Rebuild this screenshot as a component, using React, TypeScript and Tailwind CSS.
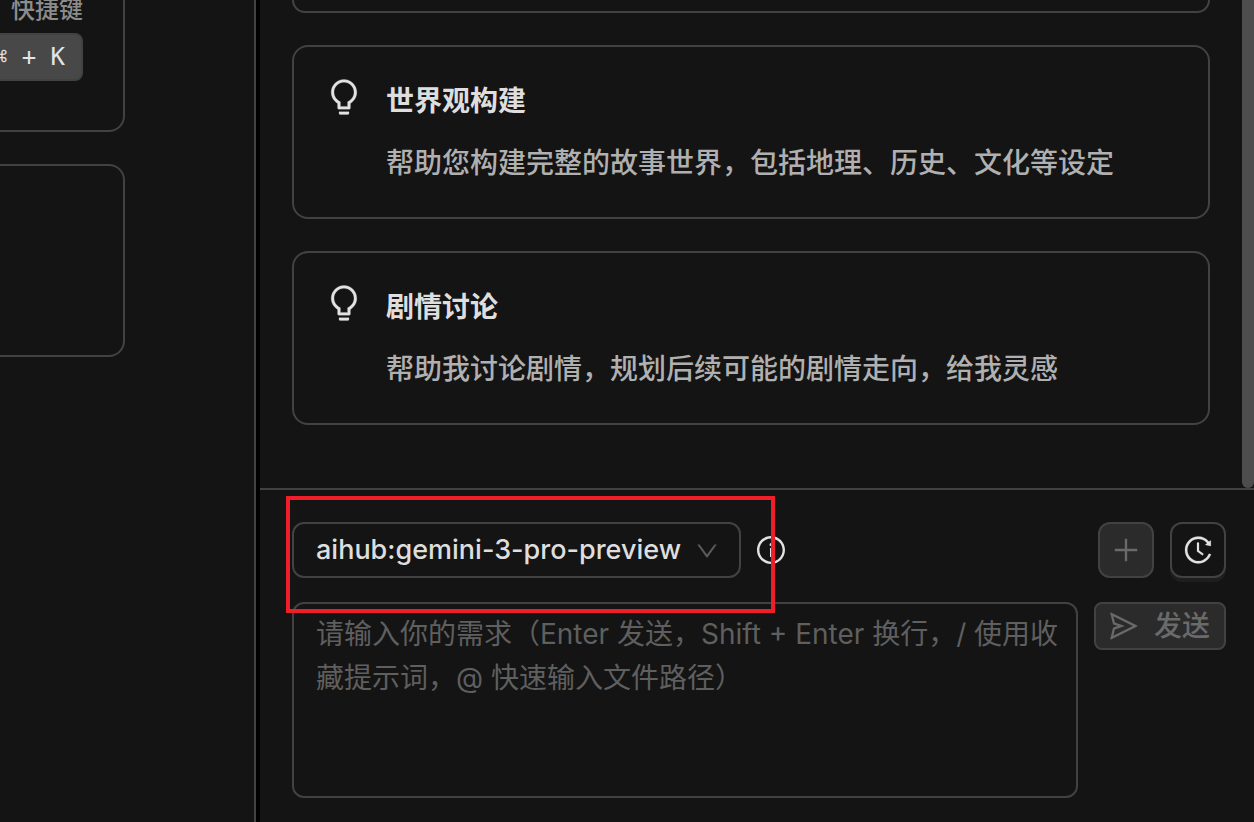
import { useState } from "react";
import {
    AiOutlineBulb,
    AiOutlineDown,
    AiOutlineHistory,
    AiOutlineInfoCircle,
    AiOutlinePlus,
    AiOutlineSend,
} from "react-icons/ai";

const prompts = [
    {
        title: "世界观构建",
        description: "帮助您构建完整的故事世界，包括地理、历史、文化等设定",
    },
    {
        title: "剧情讨论",
        description: "帮助我讨论剧情，规划后续可能的剧情走向，给我灵感",
    },
];

function ShortcutPanel() {
    return (
        <aside className="flex w-64 shrink-0 flex-col gap-8 border-r-2 border-[#424242] pr-[129px]">
            <section className="flex flex-col items-end gap-[13px] overflow-hidden rounded-br-2xl border-r-2 border-b-2 border-[#424242] pr-10 pb-[49px]">
                <p className="text-2xl leading-5 font-medium whitespace-nowrap text-[#8c8c8c]">快捷键</p>
                <div className="flex w-full justify-end">
                    <kbd className="flex h-12 shrink-0 items-center rounded-lg border-2 border-[#424242] bg-[#484848] px-4 font-['DejaVu_Sans_Mono',monospace] text-2xl whitespace-pre text-[#e4e4e4]">
                        ⌘ + K
                    </kbd>
                </div>
            </section>
            <section className="h-[193px] rounded-r-2xl border-2 border-l-0 border-[#424242]" />
        </aside>
    );
}

function PromptCard({ title, description }: { title: string; description: string }) {
    return (
        <button
            type="button"
            className="flex w-full shrink-0 items-start gap-[22px] rounded-2xl border-2 border-[#424242] px-[30px] py-[30px] text-left"
        >
            <AiOutlineBulb strokeWidth={6} className="size-10 shrink-0 text-[#e2e2e2]" />
            <span className="flex flex-col gap-[18px] py-[2px] text-[28px] leading-[44px]">
                <span className="font-bold text-[#dedede]">{title}</span>
                <span className="font-medium text-[#b0b0b0]">{description}</span>
            </span>
        </button>
    );
}

function Composer() {
    const [model, setModel] = useState("aihub:gemini-3-pro-preview");
    const [message, setMessage] = useState("");

    return (
        <form
            className="flex shrink-0 flex-col gap-6 border-t-2 border-[#424242] pt-8 pr-7 pb-6 pl-8"
            onSubmit={(e) => e.preventDefault()}
        >
            <div className="flex items-center">
                <div className="relative w-[449px]">
                    <select
                        aria-label="模型"
                        value={model}
                        onChange={(e) => setModel(e.target.value)}
                        className="block h-14 w-full appearance-none rounded-xl border-2 border-[#424242] bg-[#141414] pr-12 pl-[22px] text-[27px] font-medium text-[#dedede] outline-none"
                    >
                        <option>aihub:gemini-3-pro-preview</option>
                    </select>
                    <AiOutlineDown className="pointer-events-none absolute top-4 right-[21px] size-[26px] text-[#5a5a5a]" />
                    {/* highlight frame around the model picker */}
                    <div className="pointer-events-none absolute -top-[26px] -right-[34px] -bottom-[35px] -left-[6px] z-10 border-4 border-[#f01e28]" />
                </div>
                <button type="button" aria-label="模型信息" className="ml-[14px] text-[#e2e2e2]">
                    <AiOutlineInfoCircle className="size-8" />
                </button>
                <div className="ml-auto flex gap-4">
                    <button
                        type="button"
                        aria-label="新建对话"
                        disabled
                        className="flex size-14 items-center justify-center rounded-xl border-2 border-[#424242] bg-[#2b2b2b] text-[#6a6a6a]"
                    >
                        <AiOutlinePlus className="size-8" />
                    </button>
                    <button
                        type="button"
                        aria-label="历史记录"
                        className="flex size-14 items-center justify-center rounded-xl border-2 border-[#424242] bg-[#141414] text-[#e2e2e2] shadow-[0_4px_0_#1e1e1e]"
                    >
                        <AiOutlineHistory strokeWidth={6} className="size-8" />
                    </button>
                </div>
            </div>
            <div className="flex items-start gap-4">
                <textarea
                    aria-label="需求"
                    value={message}
                    onChange={(e) => setMessage(e.target.value)}
                    placeholder="请输入你的需求（Enter 发送，Shift + Enter 换行，/ 使用收藏提示词，@ 快速输入文件路径）"
                    className="h-[196px] min-w-0 flex-1 resize-none rounded-xl border-2 border-[#424242] bg-transparent py-2 pr-4 pl-[22px] text-[28px] leading-[44px] text-[#dedede] outline-none placeholder:text-[#5f5f5f]"
                />
                <button
                    type="submit"
                    disabled
                    className="flex h-12 w-[132px] shrink-0 items-center justify-center gap-[14px] rounded-lg border-2 border-[#424242] bg-[#2b2b2b] pr-[2px] text-[28px] font-medium text-[#6a6a6a]"
                >
                    <AiOutlineSend className="size-8 shrink-0" />
                    发送
                </button>
            </div>
        </form>
    );
}

export default function App() {
    return (
        <div className="flex h-screen overflow-hidden bg-[#141414] font-[Inter,'Noto_Sans_CJK_SC',sans-serif]">
            <ShortcutPanel />
            <div className="w-1 shrink-0 bg-black" />
            <main className="flex min-w-0 flex-1 flex-col">
                <div className="flex min-h-0 flex-1">
                    <div className="flex min-w-0 flex-1 flex-col justify-end gap-8 overflow-hidden px-8 pb-[63px]">
                        <div className="h-[13px] shrink-0 rounded-b-2xl border-2 border-t-0 border-[#424242]" />
                        {prompts.map((prompt) => (
                            <PromptCard key={prompt.title} {...prompt} />
                        ))}
                    </div>
                    <div className="w-3 shrink-0 rounded-b-lg bg-[#4d4d4d]" />
                </div>
                <Composer />
            </main>
        </div>
    );
}
